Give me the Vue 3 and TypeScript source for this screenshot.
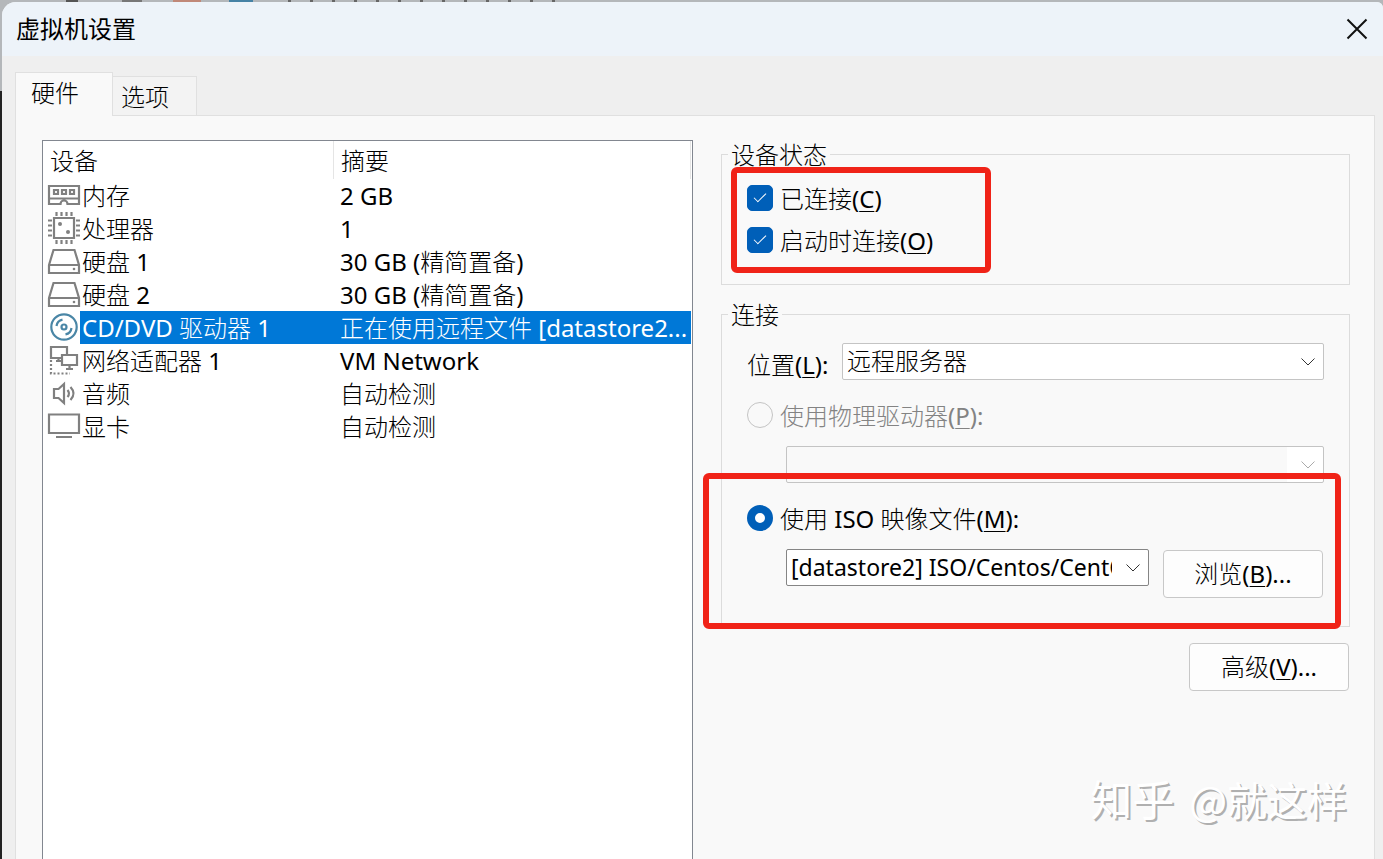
<script setup lang="ts">
import { ref } from 'vue'

type IconName = 'memory' | 'cpu' | 'disk' | 'disc' | 'network' | 'audio' | 'display'

interface Device {
  icon: IconName
  name: string
  summary: string
}

const devices: Device[] = [
  { icon: 'memory', name: '内存', summary: '2 GB' },
  { icon: 'cpu', name: '处理器', summary: '1' },
  { icon: 'disk', name: '硬盘 1', summary: '30 GB (精简置备)' },
  { icon: 'disk', name: '硬盘 2', summary: '30 GB (精简置备)' },
  { icon: 'disc', name: 'CD/DVD 驱动器 1', summary: '正在使用远程文件 [datastore2...' },
  { icon: 'network', name: '网络适配器 1', summary: 'VM Network' },
  { icon: 'audio', name: '音频', summary: '自动检测' },
  { icon: 'display', name: '显卡', summary: '自动检测' },
]

const selected = ref(4)
const activeTab = ref(0)
const tabs = ['硬件', '选项']
const connected = ref(true)
const connectAtStart = ref(true)
const source = ref('iso')
</script>

<template>
  <div class="backdrop">
    <main class="dialog">
      <header class="titlebar">
        <h1>虚拟机设置</h1>
        <button class="close" type="button" aria-label="关闭">
          <svg viewBox="0 0 22 22" width="22" height="22">
            <path d="M1.5 1.5 20.5 20.5M20.5 1.5 1.5 20.5" />
          </svg>
        </button>
      </header>

      <div class="tabs" role="tablist">
        <button
          v-for="(tab, i) in tabs"
          :key="tab"
          type="button"
          role="tab"
          class="tab"
          :class="{ active: activeTab === i }"
          :aria-selected="activeTab === i"
          @click="activeTab = i"
        >{{ tab }}</button>
      </div>

      <section class="panel">
        <div class="devices">
          <table>
            <thead>
              <tr><th class="name-col">设备</th><th>摘要</th></tr>
            </thead>
            <tbody>
              <tr
                v-for="(d, i) in devices"
                :key="i"
                :class="{ selected: selected === i }"
                @click="selected = i"
              >
                <td class="name-cell">
                  <div class="device">
                    <svg class="icon" :class="d.icon" viewBox="0 0 32 33" width="32" height="33">
                      <g v-if="d.icon === 'memory'">
                        <path d="M1 7H31V25H19.5a3.5 3.5 0 0 0-7 0H1ZM1 19.500H31" />
                        <path d="M6 11h4v4h-4zM14 11h4v4h-4zM22 11h4v4h-4z" />
                      </g>
                      <g v-else-if="d.icon === 'cpu'">
                        <path d="M6 6H26V26H6Z" />
                        <path d="M8.500 0v4M13.500 0v4M18.500 0v4M23.500 0v4M8.500 28v4M13.500 28v4M18.500 28v4M23.500 28v4M0 8.500h4M0 13.500h4M0 18.500h4M0 23.500h4M28 8.500h4M28 13.500h4M28 18.500h4M28 23.500h4" />
                        <circle class="solid" cx="12" cy="12" r="2" />
                        <circle class="solid" cx="20" cy="20" r="2" />
                      </g>
                      <g v-else-if="d.icon === 'disk'">
                        <path d="M1 20 5.500 5H26.500L31 20V28H1ZM1 20H31" />
                        <circle class="solid" cx="26" cy="24" r="1.300" />
                      </g>
                      <g v-else-if="d.icon === 'disc'">
                        <circle cx="16" cy="16" r="12.700" />
                        <circle cx="16" cy="16" r="2.500" />
                        <path d="M8.500 15A7.500 7.500 0 0 1 14.500 8.600M23.500 17A7.500 7.500 0 0 1 17.500 23.400" />
                      </g>
                      <g v-else-if="d.icon === 'network'">
                        <path d="M13 14H3V3H19V10M10.500 14v3M8 17h5" />
                        <path d="M14 11H29V21H14ZM21.500 21v4M18 25h7" />
                        <path class="dots" d="M3 16V29.500H22" />
                      </g>
                      <g v-else-if="d.icon === 'audio'">
                        <path d="M6 12H10.500L16 7V26L10.500 21H6Z" />
                        <path d="M19.500 13q3 3.500 0 7M22.500 10q6 6.500 0 13" />
                      </g>
                      <g v-else>
                        <path d="M1 4.500H31V23H1ZM8 27H24" />
                      </g>
                    </svg>
                    <span class="label">{{ d.name }}</span>
                  </div>
                </td>
                <td class="summary">{{ d.summary }}</td>
              </tr>
            </tbody>
          </table>
        </div>

        <div class="details">
          <div class="group">
            <fieldset class="status">
              <legend>设备状态</legend>
              <label class="check"><input v-model="connected" type="checkbox" /><span>已连接(<u>C</u>)</span></label>
              <label class="check"><input v-model="connectAtStart" type="checkbox" /><span>启动时连接(<u>O</u>)</span></label>
            </fieldset>
            <div class="mark mark-status"></div>
          </div>

          <div class="group">
            <fieldset class="connection">
              <legend>连接</legend>
              <div class="location">
                <label for="location">位置(<u>L</u>):</label>
                <div class="combo">
                  <select id="location"><option>远程服务器</option></select>
                  <svg viewBox="0 0 14 8" width="14" height="8"><path d="M.5.5 7 7 13.500.5" /></svg>
                </div>
              </div>
              <label class="radio disabled">
                <input v-model="source" type="radio" name="source" value="physical" disabled />
                <span>使用物理驱动器(<u>P</u>):</span>
              </label>
              <div class="combo off indent">
                <select disabled aria-label="物理驱动器"><option></option></select>
                <svg viewBox="0 0 14 8" width="14" height="8"><path d="M.5.5 7 7 13.500.5" /></svg>
              </div>
              <label class="radio iso">
                <input v-model="source" type="radio" name="source" value="iso" />
                <span>使用 ISO 映像文件(<u>M</u>):</span>
              </label>
              <div class="file indent">
                <div class="combo strong">
                  <select aria-label="ISO 映像文件"><option>[datastore2] ISO/Centos/CentOS</option></select>
                  <svg viewBox="0 0 14 8" width="14" height="8"><path d="M.5.5 7 7 13.500.5" /></svg>
                </div>
                <button class="btn" type="button">浏览(<u>B</u>)...</button>
              </div>
            </fieldset>
            <div class="mark mark-iso"></div>
          </div>

          <button class="btn advanced" type="button">高级(<u>V</u>)...</button>
        </div>
      </section>
    </main>
    <div class="watermark"><span class="brand">知乎</span> @就这样</div>
  </div>
</template>

<style>
body {
  margin: 0;
}
</style>

<style scoped>
.backdrop {
  position: relative;
  box-sizing: border-box;
  height: 100vh;
  padding: 2px 0 0 2px;
  overflow: hidden;
  color: #000;
  font: 400 24px/32px "Noto Sans", "Noto Sans CJK SC Light", "Noto Sans CJK SC", sans-serif;
  background:
    linear-gradient(#c08878, #c08878) 173px 0 / 28px 2px no-repeat,
    linear-gradient(#4682a5, #4682a5) 229px 0 / 24px 2px no-repeat,
    linear-gradient(#555, #555) 66px 0 / 12px 2px no-repeat,
    linear-gradient(#777, #777) 122px 0 / 20px 2px no-repeat,
    repeating-linear-gradient(90deg, #666 0 3px, #b4b7ba 3px 22px) 288px 0 / 280px 2px no-repeat,
    linear-gradient(#b4b7ba 91px, #222 91px);
}
button,
select {
  font: inherit;
  color: inherit;
}
.dialog {
  display: flex;
  flex-direction: column;
  height: 100%;
  background: #efefef;
  border-radius: 14px 6px 0 0;
  overflow: hidden;
}
.titlebar {
  display: flex;
  flex: none;
  align-items: center;
  justify-content: space-between;
  height: 54px;
  padding: 0 15px 0 14px;
  background: #edf3f9;
}
h1 {
  margin: 0;
  padding-bottom: 2px;
  font: 400 24px/32px "Noto Sans CJK SC", sans-serif;
}
.close {
  display: flex;
  padding: 0;
  border: 0;
  background: none;
}
.close path {
  stroke: #111;
  stroke-width: 2;
}
.tabs {
  display: flex;
  flex: none;
  align-items: flex-end;
  height: 44px;
  margin: 16px 8px -1px 13px;
  z-index: 1;
}
.tab {
  box-sizing: border-box;
  width: 84px;
  height: 40px;
  padding: 2px 0 0 8px;
  border: 1px solid #e0e0e0;
  border-left: 0;
  background: #f3f3f3;
  text-align: left;
}
.tab.active {
  width: 98px;
  height: 44px;
  padding: 0 0 3px 15px;
  border-left: 1px solid #e0e0e0;
  border-bottom: 0;
  background: #f9f9f9;
}
.panel {
  display: grid;
  flex: 1;
  grid-template-columns: minmax(0, 651fr) minmax(0, 629fr);
  gap: 28px;
  min-height: 0;
  margin: 0 8px 0 13px;
  padding: 24px 24px 0 26px;
  border: 1px solid #e0e0e0;
  border-bottom: 0;
  background: #f9f9f9;
}
.devices {
  border: 1px solid #828790;
  border-bottom: 0;
  background: #fff;
}
table {
  width: calc(100% - 1px);
  border-collapse: separate;
  border-spacing: 0;
  table-layout: fixed;
}
th {
  box-sizing: border-box;
  height: 38px;
  padding: 2px 7px 0;
  border-right: 1px solid #e5e5e5;
  font-weight: inherit;
  text-align: left;
}
.name-col {
  width: 291px;
}
td {
  height: 33px;
  padding: 0;
  line-height: 33px;
  white-space: nowrap;
}
.name-cell {
  padding-left: 5px;
}
.device {
  display: flex;
}
.icon {
  flex: none;
  overflow: visible;
  fill: none;
  stroke: #808080;
  stroke-width: 2.2;
}
.icon.disc {
  stroke: #4a86a6;
}
.icon .solid {
  fill: #808080;
  stroke: none;
}
.icon .dots {
  stroke-dasharray: 2 2;
}
.label {
  flex: 1;
  padding-left: 2px;
}
.summary {
  padding-left: 6px;
  overflow: hidden;
}
.selected .label,
.selected .summary {
  color: #fff;
  background: #0078d7;
}
.details {
  display: flex;
  flex-direction: column;
  gap: 15px;
}
.group {
  position: relative;
}
fieldset {
  min-width: 0;
  margin: 0;
  border: 1px solid #dcdcdc;
}
legend {
  height: 28px;
  padding: 0 3px;
  line-height: 30px;
}
.status {
  padding: 9px 25px 23px 6px;
}
.connection {
  padding: 15px 25px 28px;
}
.connection legend {
  margin-left: -19px;
}
.status .check {
  height: 42px;
  margin-left: 19px;
}
.check,
.radio {
  display: flex;
  align-items: center;
  gap: 7px;
}
.check span,
.radio span {
  padding-top: 2px;
}
input {
  flex: none;
  appearance: none;
  box-sizing: border-box;
  width: 26px;
  height: 26px;
  margin: 0;
}
.check input {
  display: grid;
  place-items: center;
  border: 1px solid #888;
  border-radius: 5px;
}
.check input:checked {
  border-color: #005fb8;
  background: #005fb8;
}
.check input:checked::after {
  content: "";
  width: 11px;
  height: 5px;
  margin-bottom: 4px;
  border: solid #fff;
  border-width: 0 0 1px 1px;
  rotate: -45deg;
}
.radio input {
  border: 1px solid #c4c4c4;
  border-radius: 50%;
}
.radio input:checked {
  border: 8px solid #005fb8;
  background: #fff;
}
.radio {
  height: 32px;
}
.disabled {
  margin-top: 18px;
  color: #838383;
}
.iso {
  margin-top: 19px;
}
.location {
  display: flex;
  gap: 8px;
}
.location label {
  flex: none;
  width: 87px;
  padding-top: 6px;
  white-space: nowrap;
}
.combo {
  position: relative;
  display: flex;
  flex: 1;
  min-width: 0;
  height: 37px;
}
.combo select {
  appearance: none;
  box-sizing: border-box;
  width: 100%;
  padding: 0 36px 1px 4px;
  border: 1px solid #c4c4c4;
  border-radius: 2px;
  background: #fff;
  opacity: 1;
}
.combo.off select {
  background: linear-gradient(#f9f9f9, #f9f9f9) 0 0 / calc(100% - 36px) 100% no-repeat #fff;
}
.combo.strong select {
  border-color: #858585;
  font-size: 23px;
}
.combo svg {
  position: absolute;
  top: 15px;
  right: 9px;
  fill: none;
  stroke: #333;
  pointer-events: none;
}
.combo.off svg {
  stroke: #aaa;
}
.indent {
  margin: 15px 0 0 39px;
}
.file {
  display: flex;
  gap: 14px;
}
.btn {
  box-sizing: border-box;
  flex: none;
  width: 160px;
  height: 48px;
  margin: 1px 1px 0 0;
  padding: 0;
  border: 1px solid #c8c8c8;
  border-radius: 4px;
  background: #fdfdfd;
}
.advanced {
  align-self: flex-end;
}
u {
  text-decoration-thickness: 1px;
  text-underline-offset: 3px;
}
.mark {
  position: absolute;
  box-sizing: border-box;
  border: 6px solid #f02318;
  border-radius: 6px;
  pointer-events: none;
}
.mark-status {
  top: 27px;
  left: 10px;
  width: 260px;
  height: 106px;
}
.mark-iso {
  top: 173px;
  right: 9px;
  bottom: -2px;
  left: -18px;
}
.watermark {
  position: absolute;
  right: 36px;
  bottom: 32px;
  color: #fff;
  font: 400 40px/56px "Noto Sans CJK SC", sans-serif;
  text-shadow: 2px 2px 0 #b0b0b0;
}
.brand {
  margin-right: 6px;
  font-size: 42px;
}
</style>
